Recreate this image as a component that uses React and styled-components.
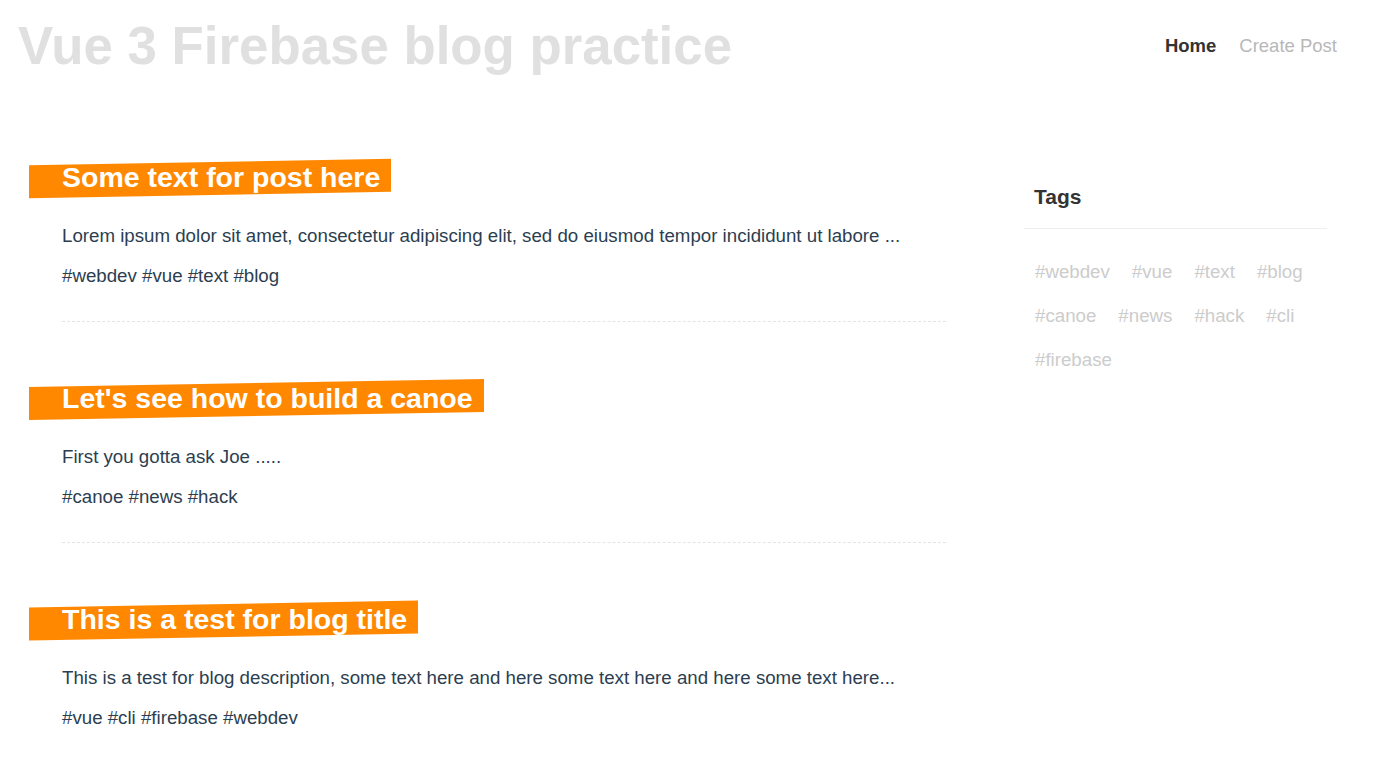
import React from "react";
import styled, { createGlobalStyle } from "styled-components";

const GlobalStyle = createGlobalStyle`
  html, body { margin: 0; padding: 0; background: #fff; }
  body {
    font-family: "Liberation Sans", Arial, Helvetica, sans-serif;
    color: #2c3e50;
  }
  * { box-sizing: border-box; }
`;

const Page = styled.div`
  width: 1377px;
  min-height: 762px;
  overflow: hidden;
`;

const Header = styled.header`
  display: flex;
  align-items: center;
  justify-content: space-between;
  padding: 16px 40px 0 18px;
`;

const SiteTitle = styled.h1`
  margin: 0;
  font-size: 52.8px;
  font-weight: 700;
  line-height: 60px;
  color: #e0e0e0;
`;

const Nav = styled.nav`
  display: flex;
  gap: 23px;
  align-items: center;
  margin-top: -1px;
`;

const NavLink = styled.a`
  font-size: 18.5px;
  line-height: 24px;
  text-decoration: none;
  cursor: pointer;
  font-weight: ${(p) => (p.$active ? 700 : 400)};
  color: ${(p) => (p.$active ? "#333333" : "#b8b8b8")};
`;

const Layout = styled.div`
  display: grid;
  grid-template-columns: 1fr 303px;
  column-gap: 46px;
  padding: 85px 50px 0 30px;
`;

const Main = styled.main`
  display: flex;
  flex-direction: column;
`;

const Post = styled.article`
  padding: 0 32px;
  margin-bottom: 60px;
`;

const PostTitle = styled.h2`
  position: relative;
  display: inline-block;
  margin: 0;
  font-size: 28.5px;
  font-weight: 700;
  line-height: 33px;
  color: #fff;
  z-index: 0;

  &::before {
    content: "";
    position: absolute;
    z-index: -1;
    left: -33px;
    right: -11px;
    top: 1px;
    height: 33px;
    background: #ff8800;
    transform: skewY(-1deg);
  }
`;

const PostBody = styled.div`
  border-bottom: 1px dashed #e4e4e4;
  padding: 28px 0 32px;
  display: flex;
  flex-direction: column;
  gap: 13px;
`;

const Text = styled.p`
  margin: 0;
  font-size: 18.7px;
  line-height: 27px;
  color: #2c3e50;
`;

const Sidebar = styled.aside`
  display: flex;
  flex-direction: column;
`;

const SidebarTitle = styled.h3`
  margin: 0;
  padding: 24px 10px 19px;
  font-size: 21px;
  line-height: 24px;
  font-weight: 700;
  color: #333;
  border-bottom: 1px solid #eeeeee;
`;

const TagCloud = styled.div`
  display: flex;
  flex-wrap: wrap;
  column-gap: 22px;
  row-gap: 17px;
  padding: 29px 10px 29px 11px;
`;

const Tag = styled.a`
  font-size: 18.7px;
  line-height: 27px;
  color: #cccccc;
  text-decoration: none;
  cursor: pointer;
`;

const posts = [
  {
    title: "Some text for post here",
    body: "Lorem ipsum dolor sit amet, consectetur adipiscing elit, sed do eiusmod tempor incididunt ut labore ...",
    tags: ["webdev", "vue", "text", "blog"],
  },
  {
    title: "Let's see how to build a canoe",
    body: "First you gotta ask Joe .....",
    tags: ["canoe", "news", "hack"],
  },
  {
    title: "This is a test for blog title",
    body: "This is a test for blog description, some text here and here some text here and here some text here...",
    tags: ["vue", "cli", "firebase", "webdev"],
  },
];

const allTags = ["webdev", "vue", "text", "blog", "canoe", "news", "hack", "cli", "firebase"];

export default function App() {
  return (
    <Page>
      <GlobalStyle />
      <Header>
        <SiteTitle>Vue 3 Firebase blog practice</SiteTitle>
        <Nav>
          <NavLink $active>Home</NavLink>
          <NavLink>Create Post</NavLink>
        </Nav>
      </Header>
      <Layout>
        <Main>
          {posts.map((p) => (
            <Post key={p.title}>
              <PostTitle>{p.title}</PostTitle>
              <PostBody>
                <Text>{p.body}</Text>
                <Text>{p.tags.map((t) => "#" + t).join(" ")}</Text>
              </PostBody>
            </Post>
          ))}
        </Main>
        <Sidebar>
          <SidebarTitle>Tags</SidebarTitle>
          <TagCloud>
            {allTags.map((t) => (
              <Tag key={t}>#{t}</Tag>
            ))}
          </TagCloud>
        </Sidebar>
      </Layout>
    </Page>
  );
}
